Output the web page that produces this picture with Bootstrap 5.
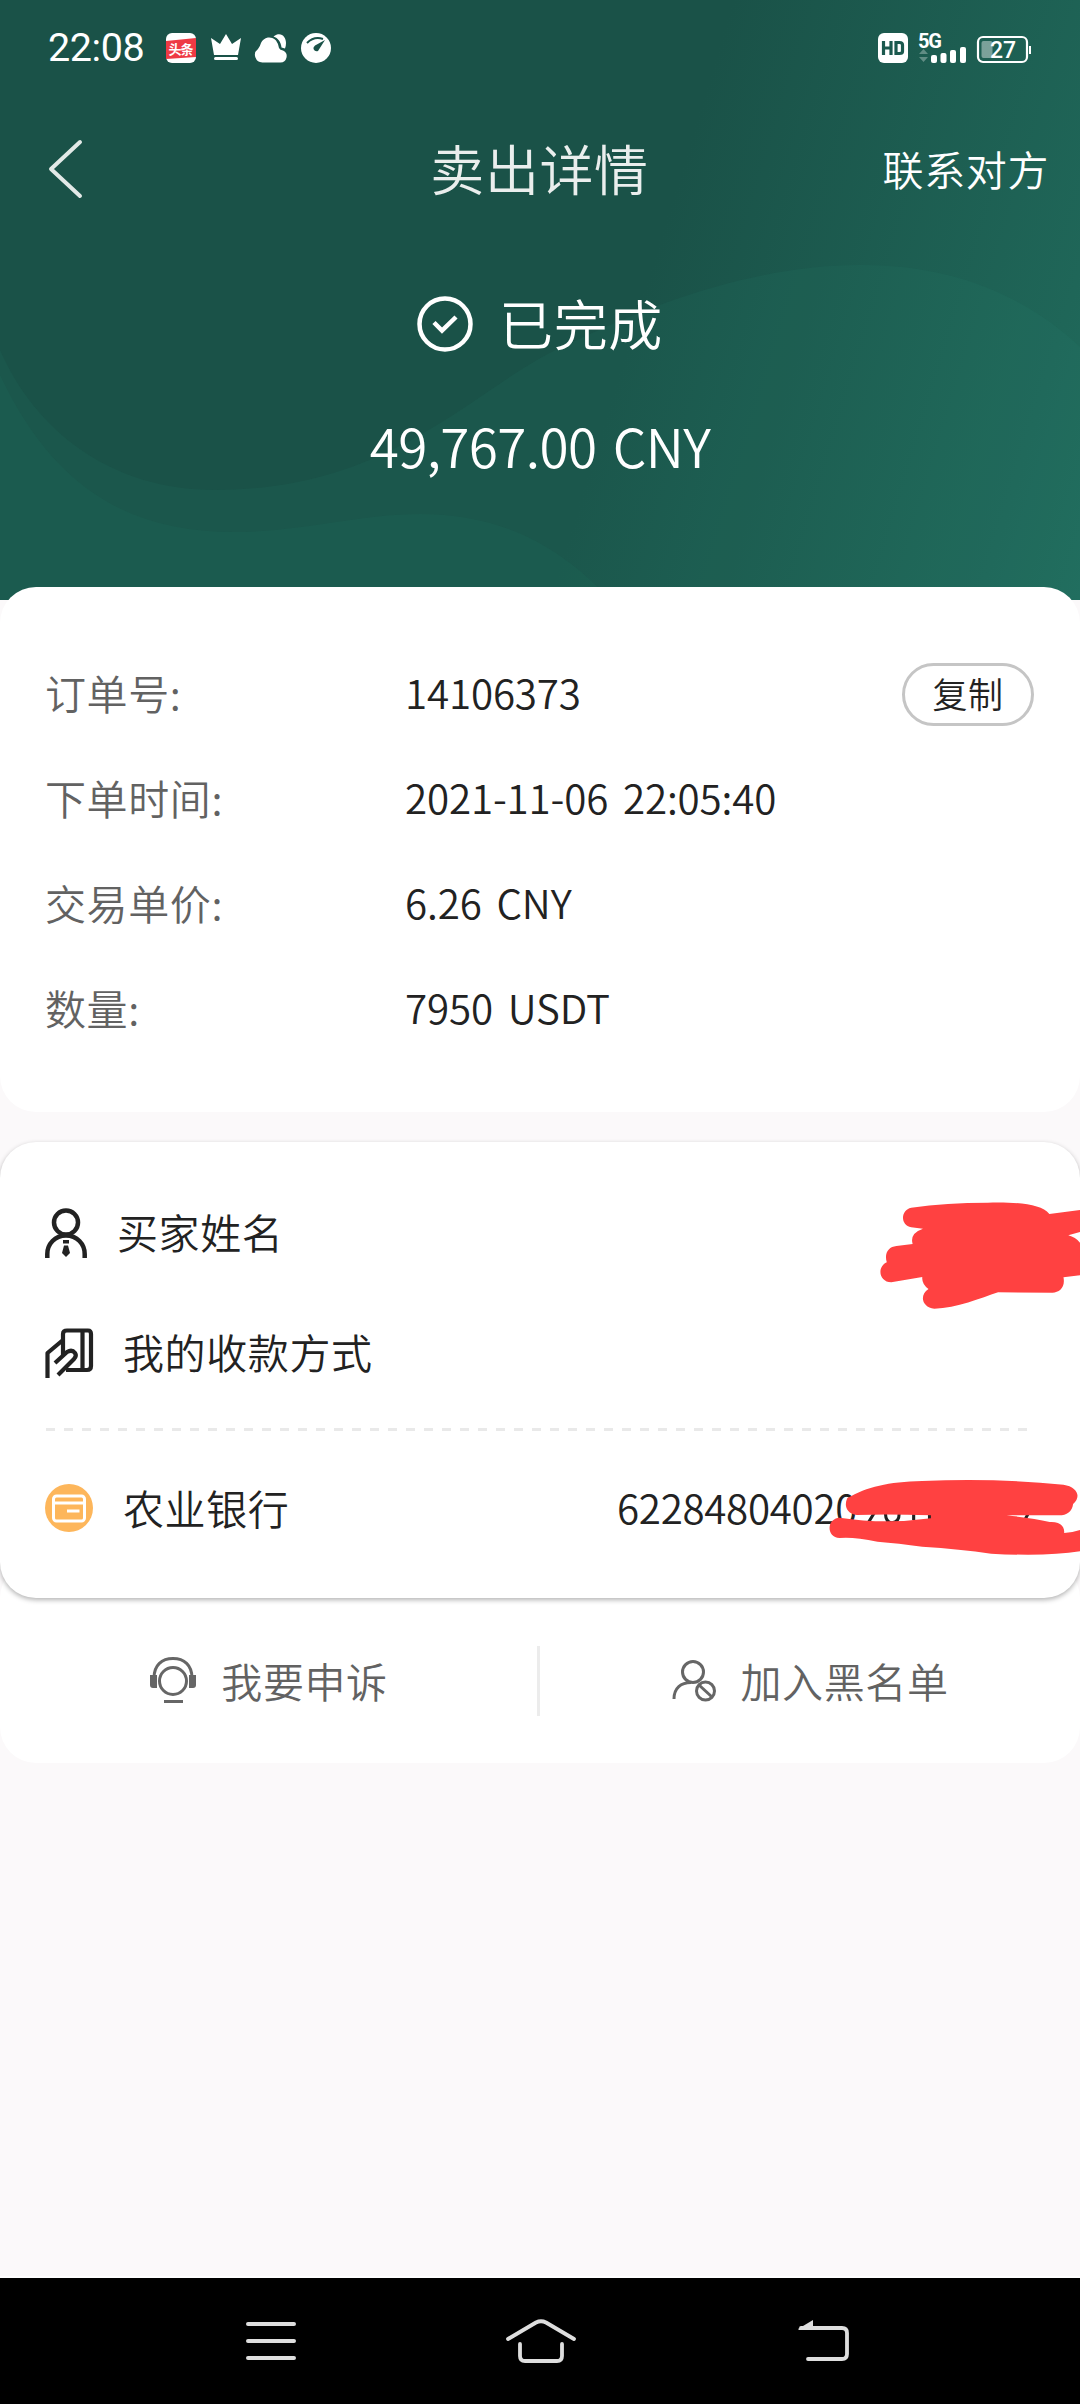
<!DOCTYPE html>
<html lang="zh-CN">
<head>
<meta charset="utf-8">
<meta name="viewport" content="width=device-width, initial-scale=1">
<title>卖出详情</title>
<link href="https://cdn.jsdelivr.net/npm/bootstrap@5.3.0/dist/css/bootstrap.min.css" rel="stylesheet">
<style>
body{font-family:Roboto,"Noto Sans CJK SC",sans-serif;font-size:41px;line-height:1;color:#222;background:#fbf9fa}
svg{display:block;flex:none;overflow:visible}
.screen{width:1080px;height:2404px}
.hero{height:600px;background:linear-gradient(107deg,#1a5248 0%,#1a5248 58%,#1f6658 92%,#206b5d 100%)}
.hero-waves{left:0;top:0}
.status{height:96px;padding:0 48px 0 48px}
.status-icons{gap:15px}
.clock{font-size:39.5px;width:118px;letter-spacing:-.4px}
.titlebar{height:145px;padding:0 31px 0 48px}
.side-l{width:165px}
.side-r{width:183px;white-space:nowrap}
.page-title{font-size:54px;color:#eaeeed}
.cn{font-family:"Noto Sans CJK SC",sans-serif;font-weight:350;letter-spacing:.6px;margin-bottom:4px}
.hero .cn,.actions .cn,.bank .cn,.bank .din{margin-bottom:1px}
.din{font-family:"Noto Sans CJK SC",sans-serif;font-weight:350;margin-bottom:4px}
.state{height:165px;gap:26px;font-size:54px;letter-spacing:0}
.total{font-size:53px;height:83px;letter-spacing:-.6px;word-spacing:5px}
.sheet{background:#fff;border-radius:36px}
.info{height:525px;margin-top:-13px;padding:55px 46px 0 45px}
.line{height:105px}
.field{width:360px;color:#626262}
.line .din{font-size:40.3px;letter-spacing:-.15px;word-spacing:6px}
.copy{width:132px;height:63px;border:3px solid #c5c5c5;border-radius:32px;font-size:35px;color:#222;padding:0 0 5px;line-height:1;margin:0}
.payee{height:456px;margin-top:30px;padding:31px 45px 0;box-shadow:0 2px 5px rgba(0,0,0,.3)}
.entry{height:120px}
.gap-a{gap:30px}.gap-b{gap:30px}
.dash{height:3px;margin:15px 7px 0 1px;background:repeating-linear-gradient(90deg,#e9e9e9 0 9px,transparent 9px 18px)}
.bank{height:154px}
.acct{width:418px;font-size:40.3px;letter-spacing:-.3px}
.scribble{left:540px;top:-12px}
.actions{height:201px;margin-top:-36px;padding-top:36px;color:#626262}
.actions .cell{height:165px;gap:24px}
.appeal{width:537px}
.rule{width:3px;height:70px;background:#ececec}
.sysnav{height:128px;border-top:2px solid #fff;background:#000;padding:0 231px 0 246px}
.home{margin-right:13px}
</style>
<script src="https://cdn.jsdelivr.net/npm/bootstrap@5.3.0/dist/js/bootstrap.bundle.min.js"></script>
</head>
<body>
<div class="screen d-flex flex-column overflow-hidden position-relative">
  <header class="hero position-relative">
    <svg class="hero-waves position-absolute" width="1080" height="600" viewBox="0 0 1080 600">
      <path d="M0 350C35 430 110 490 215 490C400 490 480 380 571 343C661 300 760 265 861 265C960 265 1030 300 1080 347V600H0Z" fill="#2b8c78" fill-opacity=".09"/>
      <path d="M0 375C50 480 120 532 235 532C300 532 360 514 420 514C500 514 560 545 610 600H0Z" fill="#2b8c78" fill-opacity=".08"/>
    </svg>
    <div class="position-relative">
      <div class="status d-flex align-items-center text-white">
        <span class="clock">22:08</span>
        <div class="status-icons d-flex me-auto">
          <svg width="30" height="30" viewBox="0 0 30 30"><rect width="30" height="30" rx="6" fill="#fff"/><path d="M0 8L30 5V24L0 26Z" fill="#ee3a44"/><text x="15" y="20.5" font-size="13" font-weight="700" text-anchor="middle" textLength="25" fill="#fff" font-family="Noto Sans CJK SC">头条</text></svg>
          <svg width="30" height="30" viewBox="0 0 30 30" fill="#fff"><path d="M0 5L9 11L15 1L21 11L30 5L27 22H3Z"/><rect x="3" y="24" width="24" height="3" rx="1.5"/></svg>
          <svg width="30" height="30" viewBox="0 0 30 30" fill="#fff"><path d="M7 29.500A7.500 7.500 0 0 1 2 16Q4 13.500 5 10A9 9 0 0 1 20 7.500Q22 10 23 15Q24 17 27 17.500A6.300 6.300 0 0 1 24 29.500Z"/><path d="M17.500 3.500C25-2 30 4 30 10Q30 13 29 15.500L25.500 14.500C25 9 22 5 17.500 3.500Z"/></svg>
          <svg width="30" height="30" viewBox="0 0 30 30"><circle cx="15" cy="15" r="15" fill="#fff"/><path d="M6 10Q13 3 22 6" fill="none" stroke="#1a5248" stroke-width="2"/><path d="M24 7L17 18Q14 19 12.500 16Q12 14 14 12.500Z" fill="#1a5248"/></svg>
        </div>
        <div class="d-flex align-items-center" style="gap:10px">
          <svg width="30" height="30" viewBox="0 0 30 30"><rect width="30" height="30" rx="6" fill="#fff"/><path d="M5.500 8V22M13 8V22M5.500 15H13M18 9.500H21.500Q24.500 9.500 24.500 12V18.500Q24.500 20.500 21.500 20.500H18Z" fill="none" stroke="#1b594e" stroke-width="3.200"/></svg>
          <svg width="49" height="30" viewBox="0 0 49 30" fill="#fff"><text x="0" y="14.500" font-family="Roboto" font-weight="700" font-size="20" textLength="24">5G</text><g opacity=".3"><path d="M1 21L5.500 16L10 21ZM1 24H10L5.500 29Z"/></g><rect x="13" y="22" width="6" height="8" rx="2"/><rect x="22.500" y="20" width="6" height="10" rx="2"/><rect x="32" y="17" width="6" height="13" rx="2"/><rect x="42" y="14" width="6" height="16" rx="2"/></svg>
          <svg width="55" height="30" viewBox="0 0 55 30"><rect x="1" y="4" width="49" height="25" rx="5" fill="none" stroke="#fff" stroke-width="2.200"/><rect x="4.500" y="8" width="11" height="17" rx="2" fill="#fff" opacity=".42"/><path d="M53 13V21" stroke="#fff" stroke-width="2"/><text x="26" y="25" fill="#fff" font-family="Roboto" font-weight="500" font-size="23" text-anchor="middle">27</text></svg>
        </div>
      </div>
      <nav class="titlebar d-flex align-items-center justify-content-between text-white">
        <div class="side-l"><svg width="36" height="60" viewBox="0 0 36 60"><path d="M32 3L3 30L32 57" fill="none" stroke="#e2e9e7" stroke-width="4" stroke-linecap="round" stroke-linejoin="round"/></svg></div>
        <div class="page-title cn">卖出详情</div>
        <div class="side-r cn d-flex justify-content-end">联系对方</div>
      </nav>
      <div class="state d-flex align-items-center justify-content-center text-white">
        <svg width="56" height="56" viewBox="0 0 56 56" fill="none" stroke="#fff"><circle cx="28" cy="28" r="25.500" stroke-width="4.500"/><path d="M17 26.500L25 34.500L39 21" stroke-width="4.500"/></svg>
        <span class="cn">已完成</span>
      </div>
      <div class="total d-flex align-items-center justify-content-center text-white"><span class="din">49,767.00 CNY</span></div>
    </div>
  </header>

  <section class="sheet info position-relative">
    <div class="line d-flex align-items-center"><span class="field cn">订单号:</span><span class="din">14106373</span><button class="btn copy cn ms-auto">复制</button></div>
    <div class="line d-flex align-items-center"><span class="field cn">下单时间:</span><span class="din">2021-11-06 22:05:40</span></div>
    <div class="line d-flex align-items-center"><span class="field cn">交易单价:</span><span class="din">6.26 CNY</span></div>
    <div class="line d-flex align-items-center"><span class="field cn">数量:</span><span class="din">7950 USDT</span></div>
  </section>

  <section class="sheet payee position-relative z-1">
    <div class="entry d-flex align-items-center gap-a">
      <svg width="42" height="50" viewBox="0 0 42 50" fill="none" stroke="#222" stroke-width="4.500"><circle cx="21" cy="14.500" r="12"/><path d="M2.300 50V46C2.300 36 10 27.500 21 27.500S39.700 36 39.700 46V50"/><path d="M18 32H24V35.500H18ZM19 37.500H23L25 45L21 49L17 45Z" fill="#222" stroke="none"/></svg>
      <span class="cn">买家姓名</span>
    </div>
    <div class="entry d-flex align-items-center gap-b">
      <svg width="48" height="50" viewBox="0 0 48 50" fill="none" stroke="#222" stroke-width="4.200" stroke-linejoin="round"><path d="M18 27V6Q18 2.500 22 2.500H43Q46 2.500 46 6V38Q46 42 42 42H21M37.500 3V41"/><path d="M18 12L2.500 25V50M10 35L22 24Q27 21 30 25Q32 28 29 31L13 47"/></svg>
      <span class="cn">我的收款方式</span>
    </div>
    <div class="dash"></div>
    <div class="bank d-flex align-items-center gap-b">
      <svg width="48" height="48" viewBox="0 0 48 48"><circle cx="24" cy="24" r="24" fill="#fdb65b"/><g fill="none" stroke="#fff" stroke-width="3"><rect x="8.500" y="12" width="31" height="25" rx="3"/><path d="M8.500 19H39.500M22 27H34.500"/></g></svg>
      <span class="cn">农业银行</span>
      <span class="acct din ms-auto">62284804020</span>
    </div>
    <svg class="scribble position-absolute" width="540" height="480" viewBox="0 0 1568 1440" preserveAspectRatio="none" fill="#ff4141">
      <path d="M953 1178L970 1150M1003 1150Q1004 1178 1022 1178Q1043 1178 1043 1150M1085 1170V1150M1131 1170V1150M1345 1162V1150M1405 1175L1418 1150" fill="none" stroke="#222" stroke-width="9"/>
      <path d="M1078 233Q1180 218 1300 218C1390 216 1455 222 1479 252L1568 240V306L1534 316Q1555 322 1568 338V436L1520 442C1526 472 1508 488 1488 488L1330 487C1280 504 1210 535 1145 536C1110 532 1100 496 1128 477Q1108 462 1110 441L1020 457C985 456 977 412 1007 397C999 370 1012 350 1035 348L1082 342Q1073 310 1112 296L1078 292C1045 285 1047 240 1078 233Z"/>
      <path d="M892 1105C950 1070 1010 1056 1110 1053Q1330 1044 1520 1064C1560 1070 1573 1100 1548 1122C1545 1145 1530 1156 1507 1156H1355Q1430 1164 1480 1176C1508 1174 1524 1188 1522 1209Q1545 1208 1568 1200V1264Q1470 1280 1310 1271Q1220 1257 1110 1250Q1040 1240 980 1235Q910 1220 870 1224C830 1221 832 1165 870 1163Q1000 1184 1135 1165V1156Q1010 1152 920 1155C888 1150 883 1125 892 1105Z"/>
    </svg>
  </section>

  <section class="sheet actions d-flex align-items-center">
    <div class="cell appeal d-flex align-items-center justify-content-center">
      <svg width="48" height="50" viewBox="0 0 48 50" fill="none" stroke="#666" stroke-width="3"><circle cx="24" cy="25" r="13.500"/><path d="M5 22C5 9 13 2.500 24 2.500S43 9 43 22M15 45.500H34"/><path d="M1 19H8V32H4Q1 32 1 29ZM40 19H47V29Q47 32 44 32H40Z" fill="#666" stroke="none"/></svg>
      <span class="cn">我要申诉</span>
    </div>
    <div class="rule"></div>
    <div class="cell d-flex align-items-center justify-content-center flex-fill">
      <svg width="45" height="46" viewBox="0 0 45 46" fill="none" stroke="#666" stroke-width="3"><circle cx="21" cy="14" r="10.500"/><path d="M2 41C2 30 9 24.500 19 24.500"/><circle cx="33.500" cy="33" r="9"/><path d="M27 27L40 39"/></svg>
      <span class="cn">加入黑名单</span>
    </div>
  </section>

  <footer class="sysnav mt-auto d-flex align-items-center justify-content-between">
    <svg width="50" height="44" viewBox="0 0 50 44" stroke="#dedede" stroke-width="4" stroke-linecap="round"><path d="M2 5H48M2 22H48M2 39H48"/></svg>
    <svg class="home" width="70" height="44" viewBox="0 0 70 44" fill="none" stroke="#dedede" stroke-width="3.800" stroke-linecap="round" stroke-linejoin="round"><path d="M2 20L30 3.500Q35 1 40 3.500L68 20M14 25V37Q14 42 19 42H51Q56 42 56 37V25"/></svg>
    <svg width="51" height="44" viewBox="0 0 51 44" fill="none" stroke="#dedede" stroke-width="3.800" stroke-linecap="round"><path d="M3 9H44Q49 9 49 14V35Q49 40 44 40H10"/><path d="M0 10L15 1V11H1Z" fill="#dedede" stroke="none"/></svg>
  </footer>
</div>
</body>
</html>
